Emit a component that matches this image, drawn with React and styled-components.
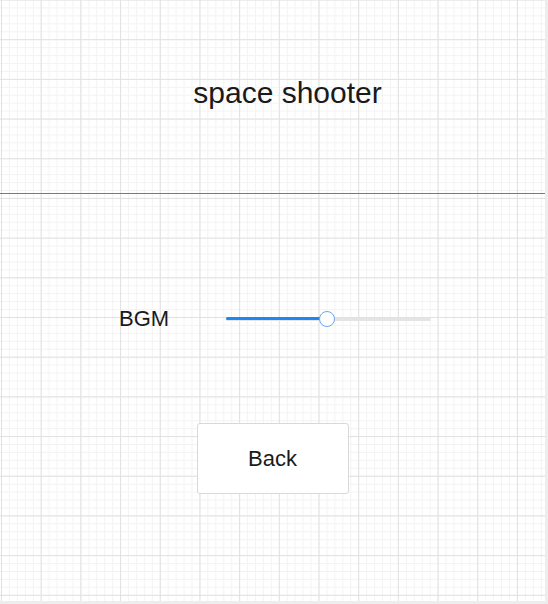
import React, { useState } from "react";
import styled, { createGlobalStyle } from "styled-components";

const GlobalStyle = createGlobalStyle`
  html, body {
    margin: 0;
    padding: 0;
    background: #ffffff;
  }
  body {
    font-family: "Liberation Sans", Arial, sans-serif;
    color: #1a1a1a;
  }
`;

const App = () => {
  const [volume] = useState(0.49);

  return (
    <>
      <GlobalStyle />
      <Canvas>
        <Header>
          <Title>space shooter</Title>
        </Header>
        <Divider />
        <Body>
          <SettingRow>
            <Label>BGM</Label>
            <Slider>
              <Track />
              <Fill style={{ width: `${volume * 100}%` }} />
              <Thumb style={{ left: `${volume * 100}%` }} />
            </Slider>
          </SettingRow>
          <Button>Back</Button>
        </Body>
      </Canvas>
    </>
  );
};

export default App;

const Canvas = styled.div`
  width: 545px;
  height: 601px;
  border-right: 3px solid #ededed;
  border-bottom: 3px solid #ededed;
  background-color: #ffffff;
  background-image: linear-gradient(to right, #e1e1e1 1px, transparent 1px),
    linear-gradient(to bottom, #e1e1e1 1px, transparent 1px),
    linear-gradient(to right, #f3f3f3 1px, transparent 1px),
    linear-gradient(to bottom, #f3f3f3 1px, transparent 1px);
  background-size: 39.7px 39.7px, 39.7px 39.7px, 7.94px 7.94px,
    7.94px 7.94px;
  background-position: 1px -0.5px, 1px -0.5px, 1px -0.5px, 1px -0.5px;
  display: flex;
  flex-direction: column;
`;

const Header = styled.div`
  height: 193px;
  display: flex;
  align-items: center;
  justify-content: center;
  padding-left: 30px;
  padding-bottom: 7px;
  box-sizing: border-box;
`;

const Title = styled.h1`
  margin: 0;
  font-size: 30px;
  font-weight: normal;
  color: #1a1a1a;
`;

const Divider = styled.div`
  height: 1px;
  background: #6f6fc6;
`;

const Body = styled.div`
  display: flex;
  flex-direction: column;
  align-items: center;
  padding-top: 105px;
`;

const SettingRow = styled.div`
  align-self: stretch;
  height: 40px;
  display: flex;
  align-items: center;
  padding-left: 119px;
`;

const Label = styled.span`
  width: 107px;
  font-size: 22px;
  color: #1a1a1a;
`;

const Slider = styled.div`
  position: relative;
  width: 205px;
  height: 16px;
  display: flex;
  align-items: center;
`;

const Track = styled.div`
  width: 100%;
  height: 3px;
  border-radius: 2px;
  background: #e4e4e4;
`;

const Fill = styled.div`
  position: absolute;
  left: 0;
  top: 6px;
  height: 3px;
  border-radius: 2px;
  background: #1f86f2;
`;

const Thumb = styled.div`
  position: absolute;
  top: 0;
  width: 14px;
  height: 14px;
  margin-left: -7px;
  border-radius: 50%;
  background: #ffffff;
  border: 1px solid #6ba6ee;
`;

const Button = styled.button`
  margin-top: 84px;
  width: 152px;
  height: 71px;
  background: #ffffff;
  border: 1px solid #d9d9d9;
  border-radius: 3px;
  font-family: "Liberation Sans", Arial, sans-serif;
  font-size: 22px;
  color: #1a1a1a;
  cursor: pointer;
`;
